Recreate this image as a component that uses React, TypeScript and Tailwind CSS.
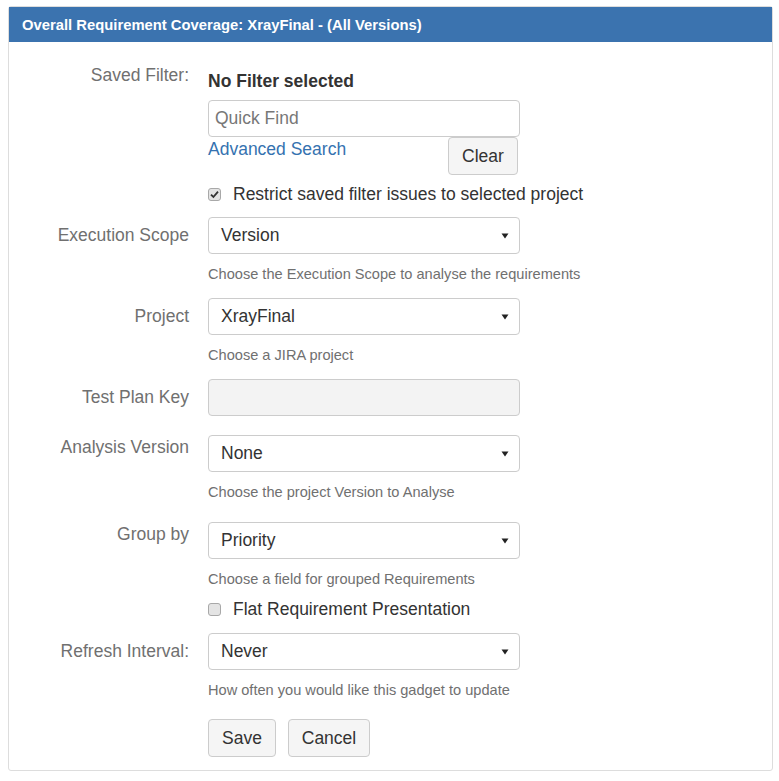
import React from "react";

function Caret() {
  return (
    <svg width="8" height="6" viewBox="0 0 8 6" className="absolute right-[10px] top-1/2 -translate-y-1/2">
      <path d="M0.5 0.5 L7.5 0.5 L4 5.5 Z" fill="#222" />
    </svg>
  );
}

function Select({ value }: { value: string }) {
  return (
    <div className="relative h-[37px] w-[312px] rounded-[4px] border border-[#ccc] bg-white pl-[12px] leading-[35px] text-[#333]">
      {value}
      <Caret />
    </div>
  );
}

function Check({ checked }: { checked: boolean }) {
  return (
    <div className="flex h-[13px] w-[13px] shrink-0 items-center justify-center rounded-[3px] border border-[#a8a8a8] bg-[#e4e4e4]">
      {checked && (
        <svg width="9" height="9" viewBox="0 0 9 9">
          <path d="M1 4.6 L3.4 7 L8 1.6" stroke="#333" strokeWidth="1.8" fill="none" />
        </svg>
      )}
    </div>
  );
}

function Row({
  label,
  labelPt,
  mt,
  children,
}: {
  label?: string;
  labelPt: string;
  mt: string;
  children: React.ReactNode;
}) {
  return (
    <div className={`flex ${mt}`}>
      <div className={`w-[180px] shrink-0 text-right leading-[25px] text-[#707070] ${labelPt}`}>{label}</div>
      <div className="ml-[19px] w-[312px]">{children}</div>
    </div>
  );
}

function Help({ children }: { children: React.ReactNode }) {
  return <div className="mt-[10px] whitespace-nowrap text-[14.6px] leading-[20px] text-[#707070]">{children}</div>;
}

export default function App() {
  return (
    <div className="min-h-[781px] w-[779px] bg-white font-['Liberation_Sans',Arial,sans-serif] text-[17.5px] text-[#333]">
      <div className="ml-[8px] pt-[6px]">
        <div className="w-[765px] rounded-[3px] border border-[#ddd] pb-[13px]">
          <div className="flex h-[35px] items-center bg-[#3b73af] pl-[13px] pt-[1px] text-[14.8px] font-bold text-white">
            Overall Requirement Coverage: XrayFinal - (All Versions)
          </div>

          <Row label="Saved Filter:" labelPt="pt-0" mt="mt-[21px]">
            <div className="mt-[6px] font-bold leading-[25px]">No Filter selected</div>
            <div className="mt-[6px] h-[37px] w-[312px] rounded-[4px] border border-[#ccc] bg-white pl-[6px] leading-[35px] text-[#777]">
              Quick Find
            </div>
            <div className="flex h-[37px] items-start justify-between">
              <a className="leading-[25px] text-[#3572b0]">Advanced Search</a>
              <button className="mr-[2px] h-[38px] w-[70px] rounded-[4px] border border-[#ccc] bg-[#f5f5f5] text-[#333]">
                Clear
              </button>
            </div>
            <div className="mt-[8px] flex items-center whitespace-nowrap leading-[25px]">
              <Check checked />
              <span className="ml-[12px]">Restrict saved filter issues to selected project</span>
            </div>
          </Row>

          <Row label="Execution Scope" labelPt="pt-[6px]" mt="mt-[10px]">
            <Select value="Version" />
            <Help>Choose the Execution Scope to analyse the requirements</Help>
          </Row>

          <Row label="Project" labelPt="pt-[6px]" mt="mt-[14px]">
            <Select value="XrayFinal" />
            <Help>Choose a JIRA project</Help>
          </Row>

          <Row label="Test Plan Key" labelPt="pt-[6px]" mt="mt-[14px]">
            <div className="h-[37px] w-[312px] rounded-[4px] border border-[#ccc] bg-[#f3f3f3]" />
          </Row>

          <Row label="Analysis Version" labelPt="pt-0" mt="mt-[19px]">
            <Select value="None" />
            <Help>Choose the project Version to Analyse</Help>
          </Row>

          <Row label="Group by" labelPt="pt-0" mt="mt-[20px]">
            <Select value="Priority" />
            <Help>Choose a field for grouped Requirements</Help>
            <div className="mt-[8px] flex items-center whitespace-nowrap leading-[25px]">
              <Check checked={false} />
              <span className="ml-[12px]">Flat Requirement Presentation</span>
            </div>
          </Row>

          <Row label="Refresh Interval:" labelPt="pt-[6px]" mt="mt-[11px]">
            <Select value="Never" />
            <Help>How often you would like this gadget to update</Help>
            <div className="mt-[19px] flex gap-[12px]">
              <button className="h-[38px] w-[68px] rounded-[4px] border border-[#ccc] bg-[#f5f5f5] text-[#333]">Save</button>
              <button className="h-[38px] w-[82px] rounded-[4px] border border-[#ccc] bg-[#f5f5f5] text-[#333]">Cancel</button>
            </div>
          </Row>
        </div>
      </div>
    </div>
  );
}
